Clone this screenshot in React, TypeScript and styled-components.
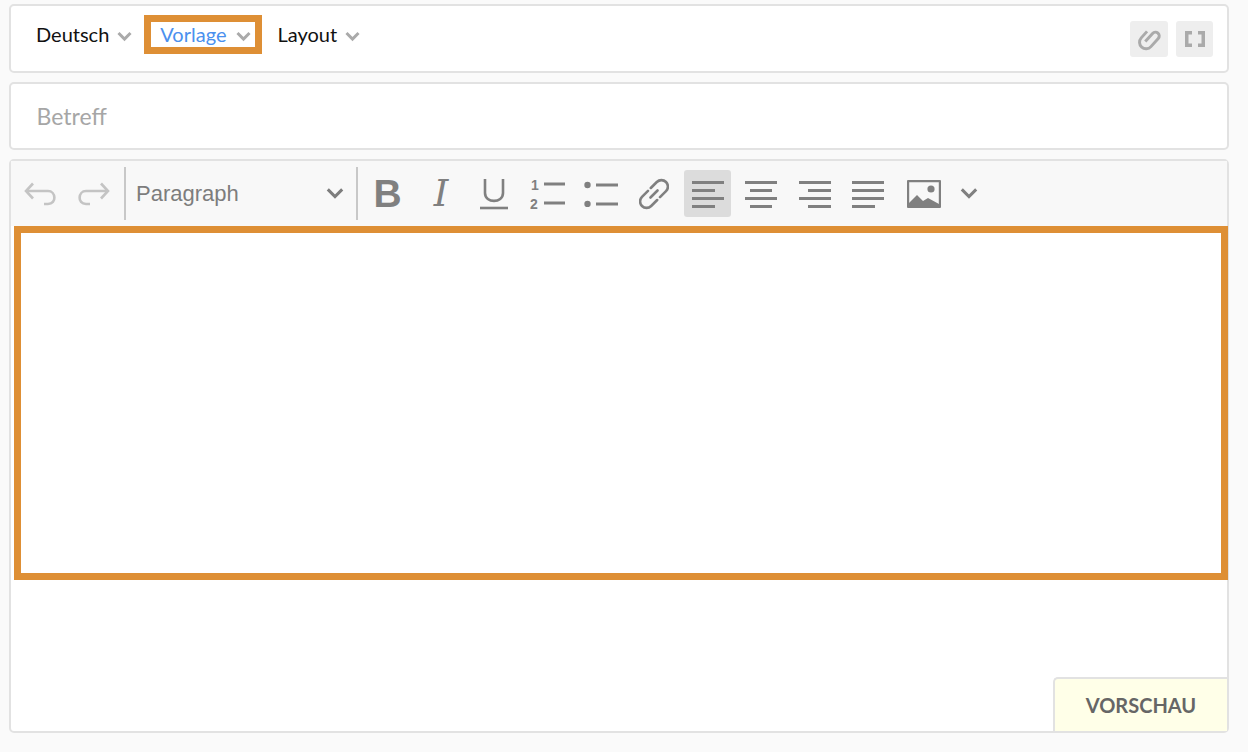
import React from "react";
import styled, { createGlobalStyle } from "styled-components";

const GlobalStyle = createGlobalStyle`
  html, body {
    margin: 0;
    background: #fafafa;
    font-family: "Lato", "Liberation Sans", sans-serif;
  }
`;

const Page = styled.div`
  width: 1220px;
  height: 752px;
  box-sizing: border-box;
  margin-left: 9px;
  padding: 4px 0 19px;
  display: flex;
  flex-direction: column;
  gap: 9px;
`;

const Card = styled.div`
  background: #fff;
  border: 2px solid #e2e2e2;
  border-radius: 5px;
  box-sizing: border-box;
`;

const TopBar = styled(Card)`
  height: 69px;
  padding: 9px 14px 0 25px;
  display: flex;
  align-items: flex-start;
  justify-content: space-between;
`;

const Menus = styled.div`
  display: flex;
  align-items: center;
`;

const Menu = styled.div<{ $marked?: boolean }>`
  display: flex;
  align-items: center;
  gap: 8px;
  padding-bottom: 2px;
  font-size: 20px;
  color: ${(p) => (p.$marked ? "#4a90ee" : "#111")};
  ${(p) =>
    p.$marked &&
    `
    height: 39px;
    box-sizing: border-box;
    margin: 0 15px 0 12px;
    padding: 0 4px 2px 9px;
    border: 7px solid #de8f35;
    gap: 10px;
  `}
  svg {
    color: #aaa;
    transform: translateY(3px);
  }
`;

const Tools = styled.div`
  display: flex;
  gap: 8px;
  margin-top: 6px;
`;

const GreyButton = styled.div<{ $w: number }>`
  width: ${(p) => p.$w}px;
  height: 36px;
  background: #eee;
  border-radius: 3px;
  color: #aaa;
  display: flex;
  align-items: center;
  justify-content: center;
`;

const SubjectBar = styled(Card)`
  height: 68px;
  padding-left: 25.500px;
  display: flex;
  align-items: center;
  font-size: 23px;
  color: #a6a6a6;
`;

const Editor = styled(Card)`
  flex: 1;
  display: flex;
  flex-direction: column;
`;

const ToolBar = styled.div`
  height: 65px;
  flex: none;
  background: #f8f8f8;
  display: flex;
  align-items: center;
  color: #808080;
`;

const HistoryGroup = styled.div`
  width: 113px;
  box-sizing: border-box;
  padding-left: 13px;
  display: flex;
  gap: 18px;
  color: #c4c4c4;
`;

const Divider = styled.div`
  width: 2px;
  height: 53px;
  background: #c8c8c8;
  flex: none;
`;

const FormatSelect = styled.div`
  width: 230px;
  box-sizing: border-box;
  padding: 0 12px 0 10px;
  display: flex;
  align-items: center;
  justify-content: space-between;
  font-family: "Liberation Sans", Arial, sans-serif;
  font-size: 22px;
  color: #7d7d7d;
`;

const Buttons = styled.div`
  display: flex;
  gap: 6.2px;
  margin-left: 6px;
`;

const ToolButton = styled.div<{ $active?: boolean; $shift?: number }>`
  width: 47.2px;
  height: 47px;
  border-radius: 3px;
  margin-left: ${(p) => p.$shift ?? 0}px;
  background: ${(p) => (p.$active ? "#dcdcdc" : "transparent")};
  display: flex;
  align-items: center;
  justify-content: center;
`;

const BoldGlyph = styled.span`
  font-family: "Liberation Sans", Arial, sans-serif;
  font-weight: 700;
  font-size: 39px;
  line-height: 1;
`;

const ItalicGlyph = styled.span`
  font-family: "DejaVu Serif", serif;
  font-style: italic;
  font-size: 37px;
  line-height: 1;
`;

const MoreButton = styled.div`
  margin-left: 1px;
  width: 40px;
  display: flex;
  justify-content: center;
`;

const EditArea = styled.div`
  height: 354px;
  flex: none;
  box-sizing: border-box;
  margin: 0 -1px 0 3px;
  border: 7px solid #de8f35;
  background: #fff;
`;

const Footer = styled.div`
  flex: 1;
  display: flex;
  justify-content: flex-end;
  align-items: flex-end;
`;

const PreviewTab = styled.div`
  width: 174px;
  height: 54px;
  box-sizing: border-box;
  background: #ffffe8;
  border: 2px solid #e2e2e2;
  border-width: 2px 0 0 2px;
  border-top-left-radius: 5px;
  display: flex;
  align-items: center;
  justify-content: center;
  font-size: 20px;
  font-weight: 700;
  color: #666;
`;

const Chevron = ({ w = 15, sw = 3 }: { w?: number; sw?: number }) => (
  <svg width={w} height={w * 0.67} viewBox="0 0 15 10" fill="none" stroke="currentColor" strokeWidth={sw * (15 / w)}>
    <path d="M1.5 2 7.5 8l6-6" />
  </svg>
);

const Undo = ({ flip }: { flip?: boolean }) => (
  <svg width="34" height="26" viewBox="0 0 34 26" fill="none" stroke="currentColor" strokeWidth="2.6" style={{ transform: flip ? "scaleX(-1)" : undefined }}>
    <path d="M9 2.5 2 10l7 7.5" />
    <path d="M2 10h22c8 0 9 13 0 13h-4" />
  </svg>
);

const Clip = () => (
  <svg width="24" height="24" viewBox="0 0 22 22" fill="none" stroke="currentColor" strokeWidth="2.700">
    <g transform="rotate(42 11 11)">
      <path d="M5 7v8a6 6 0 0 0 12 0V5a3.500 3.500 0 0 0-7 0v10" />
    </g>
  </svg>
);

const Brackets = () => (
  <svg width="20" height="16" viewBox="0 0 20 16" fill="none" stroke="currentColor" strokeWidth="3.500">
    <path d="M7 1.750H1.750v12.500H7" />
    <path d="M13 1.750h5.250v12.500H13" />
  </svg>
);

const Underline = () => (
  <svg width="28" height="32" viewBox="0 0 28 32" fill="none" stroke="currentColor" strokeWidth="2.6">
    <path d="M5 1v14c0 10.500 18 10.500 18 0V1" />
    <path d="M0 30h28" />
  </svg>
);

const OrderedList = () => (
  <svg width="36" height="34" viewBox="0 0 36 34" fill="currentColor">
    <text x="1" y="12.500" fontFamily="Liberation Sans" fontWeight="700" fontSize="14">1</text>
    <text x="0" y="32" fontFamily="Liberation Sans" fontWeight="700" fontSize="14">2</text>
    <path d="M14 5.500h21v3H14zM14 24.500h21v3H14z" />
  </svg>
);

const BulletList = () => (
  <svg width="35" height="26" viewBox="0 0 35 26" fill="currentColor">
    <circle cx="3.500" cy="4" r="3.200" />
    <circle cx="3.500" cy="23" r="3.200" />
    <path d="M12 2.500h22v3H12zM12 21.500h22v3H12z" />
  </svg>
);

const LinkIcon = () => (
  <svg width="30" height="32" viewBox="0 0 30 32" fill="none" stroke="currentColor" strokeWidth="2.600" strokeLinecap="round">
    <g transform="rotate(-45 15 16)">
      <path d="M13 9.500H4.500a6.500 6.500 0 0 0 0 13H13" />
      <path d="M17 22.500h8.500a6.500 6.500 0 0 0 0-13H17" />
      <path d="M10 16h10" />
    </g>
  </svg>
);

const lineSets: Record<string, [number, number][]> = {
  left: [[0, 32], [0, 23], [0, 32], [0, 23]],
  center: [[0, 32], [5, 22], [0, 32], [5, 22]],
  right: [[0, 32], [9, 23], [0, 32], [9, 23]],
  justify: [[0, 32], [0, 32], [0, 32], [0, 23]],
};

const AlignIcon = ({ kind }: { kind: string }) => (
  <svg width="32" height="28" viewBox="0 0 32 28" fill="currentColor">
    {lineSets[kind].map(([x, w], i) => (
      <rect key={i} x={x} y={1 + i * 8} width={w} height="3" />
    ))}
  </svg>
);

const ImageIcon = () => (
  <svg width="34" height="28" viewBox="0 0 34 28">
    <rect x="1" y="1" width="32" height="26" fill="none" stroke="currentColor" strokeWidth="2.400" rx="1" />
    <circle cx="24" cy="9" r="3.600" fill="currentColor" />
    <path d="M2 26v-3l8-8 6 6 5-3 11 6v2z" fill="currentColor" />
  </svg>
);

export default function App() {
  return (
    <>
      <GlobalStyle />
      <Page>
        <TopBar>
          <Menus>
            <Menu>Deutsch <Chevron /></Menu>
            <Menu $marked>Vorlage <Chevron /></Menu>
            <Menu>Layout <Chevron /></Menu>
          </Menus>
          <Tools>
            <GreyButton $w={38}><Clip /></GreyButton>
            <GreyButton $w={37}><Brackets /></GreyButton>
          </Tools>
        </TopBar>
        <SubjectBar>Betreff</SubjectBar>
        <Editor>
          <ToolBar>
            <HistoryGroup>
              <Undo />
              <Undo flip />
            </HistoryGroup>
            <Divider />
            <FormatSelect>
              Paragraph
              <Chevron w={18} />
            </FormatSelect>
            <Divider />
            <Buttons>
              <ToolButton><BoldGlyph>B</BoldGlyph></ToolButton>
              <ToolButton><ItalicGlyph>I</ItalicGlyph></ToolButton>
              <ToolButton><Underline /></ToolButton>
              <ToolButton><OrderedList /></ToolButton>
              <ToolButton><BulletList /></ToolButton>
              <ToolButton><LinkIcon /></ToolButton>
              <ToolButton $active><AlignIcon kind="left" /></ToolButton>
              <ToolButton><AlignIcon kind="center" /></ToolButton>
              <ToolButton><AlignIcon kind="right" /></ToolButton>
              <ToolButton><AlignIcon kind="justify" /></ToolButton>
              <ToolButton $shift={3}><ImageIcon /></ToolButton>
            </Buttons>
            <MoreButton><Chevron w={18} /></MoreButton>
          </ToolBar>
          <EditArea />
          <Footer>
            <PreviewTab>VORSCHAU</PreviewTab>
          </Footer>
        </Editor>
      </Page>
    </>
  );
}
